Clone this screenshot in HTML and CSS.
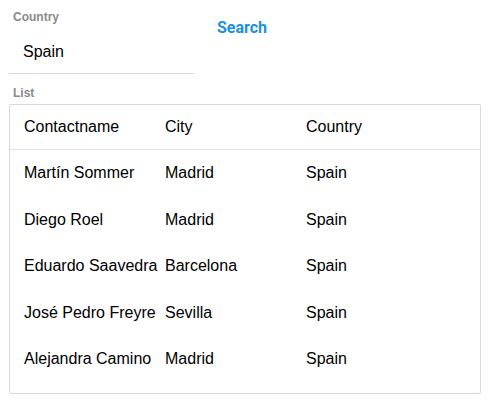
FILE: index.html
```html
<!DOCTYPE html>
<html>
<head>
<meta charset="utf-8">
<link rel="stylesheet" href="styles.css">
</head>
<body>
<div class="top">
  <div class="field">
    <div class="label">Country</div>
    <div class="input">Spain</div>
  </div>
  <div class="search">Search</div>
</div>
<div class="label list-label">List</div>
<div class="table">
  <div class="row head">
    <div class="cell">Contactname</div><div class="cell">City</div><div class="cell">Country</div>
  </div>
  <div class="body">
    <div class="row"><div class="cell">Martín Sommer</div><div class="cell">Madrid</div><div class="cell">Spain</div></div>
    <div class="row"><div class="cell">Diego Roel</div><div class="cell">Madrid</div><div class="cell">Spain</div></div>
    <div class="row"><div class="cell">Eduardo Saavedra</div><div class="cell">Barcelona</div><div class="cell">Spain</div></div>
    <div class="row"><div class="cell">José Pedro Freyre</div><div class="cell">Sevilla</div><div class="cell">Spain</div></div>
    <div class="row"><div class="cell">Alejandra Camino</div><div class="cell">Madrid</div><div class="cell">Spain</div></div>
  </div>
</div>
</body>
</html>
```
FILE: styles.css
```css
body {
  margin: 0;
  padding: 0 15px 0 9px;
  font-family: "Liberation Sans", Arial, sans-serif;
  font-size: 16px;
  color: #000;
  background: #fff;
}
.top {
  display: flex;
  align-items: flex-start;
}
.field {
  width: 185px;
  border-bottom: 1px solid #d9d9d9;
  padding-top: 10px;
}
.label {
  font-size: 12px;
  font-weight: bold;
  color: #8a8a8a;
  padding-left: 4px;
  line-height: 14px;
}
.input {
  padding: 19px 0 12px 14px;
  line-height: 18px;
}
.search {
  font-family: Roboto, sans-serif;
  font-weight: bold;
  font-size: 16px;
  color: #1a8fe0;
  margin-left: 23px;
  padding-top: 19px;
  line-height: 18px;
}
.list-label {
  margin-top: 12px;
  height: 18px;
}
.table {
  border: 1px solid #d9d9d9;
  border-radius: 2px;
  padding-bottom: 10px;
}
.row {
  display: grid;
  grid-template-columns: 141px 141px 141px;
  height: 46.5px;
  align-items: center;
}
.head {
  height: 44px;
  border-bottom: 1px solid #e0e0e0;
}
.cell {
  padding-left: 14px;
  white-space: nowrap;
}
```
